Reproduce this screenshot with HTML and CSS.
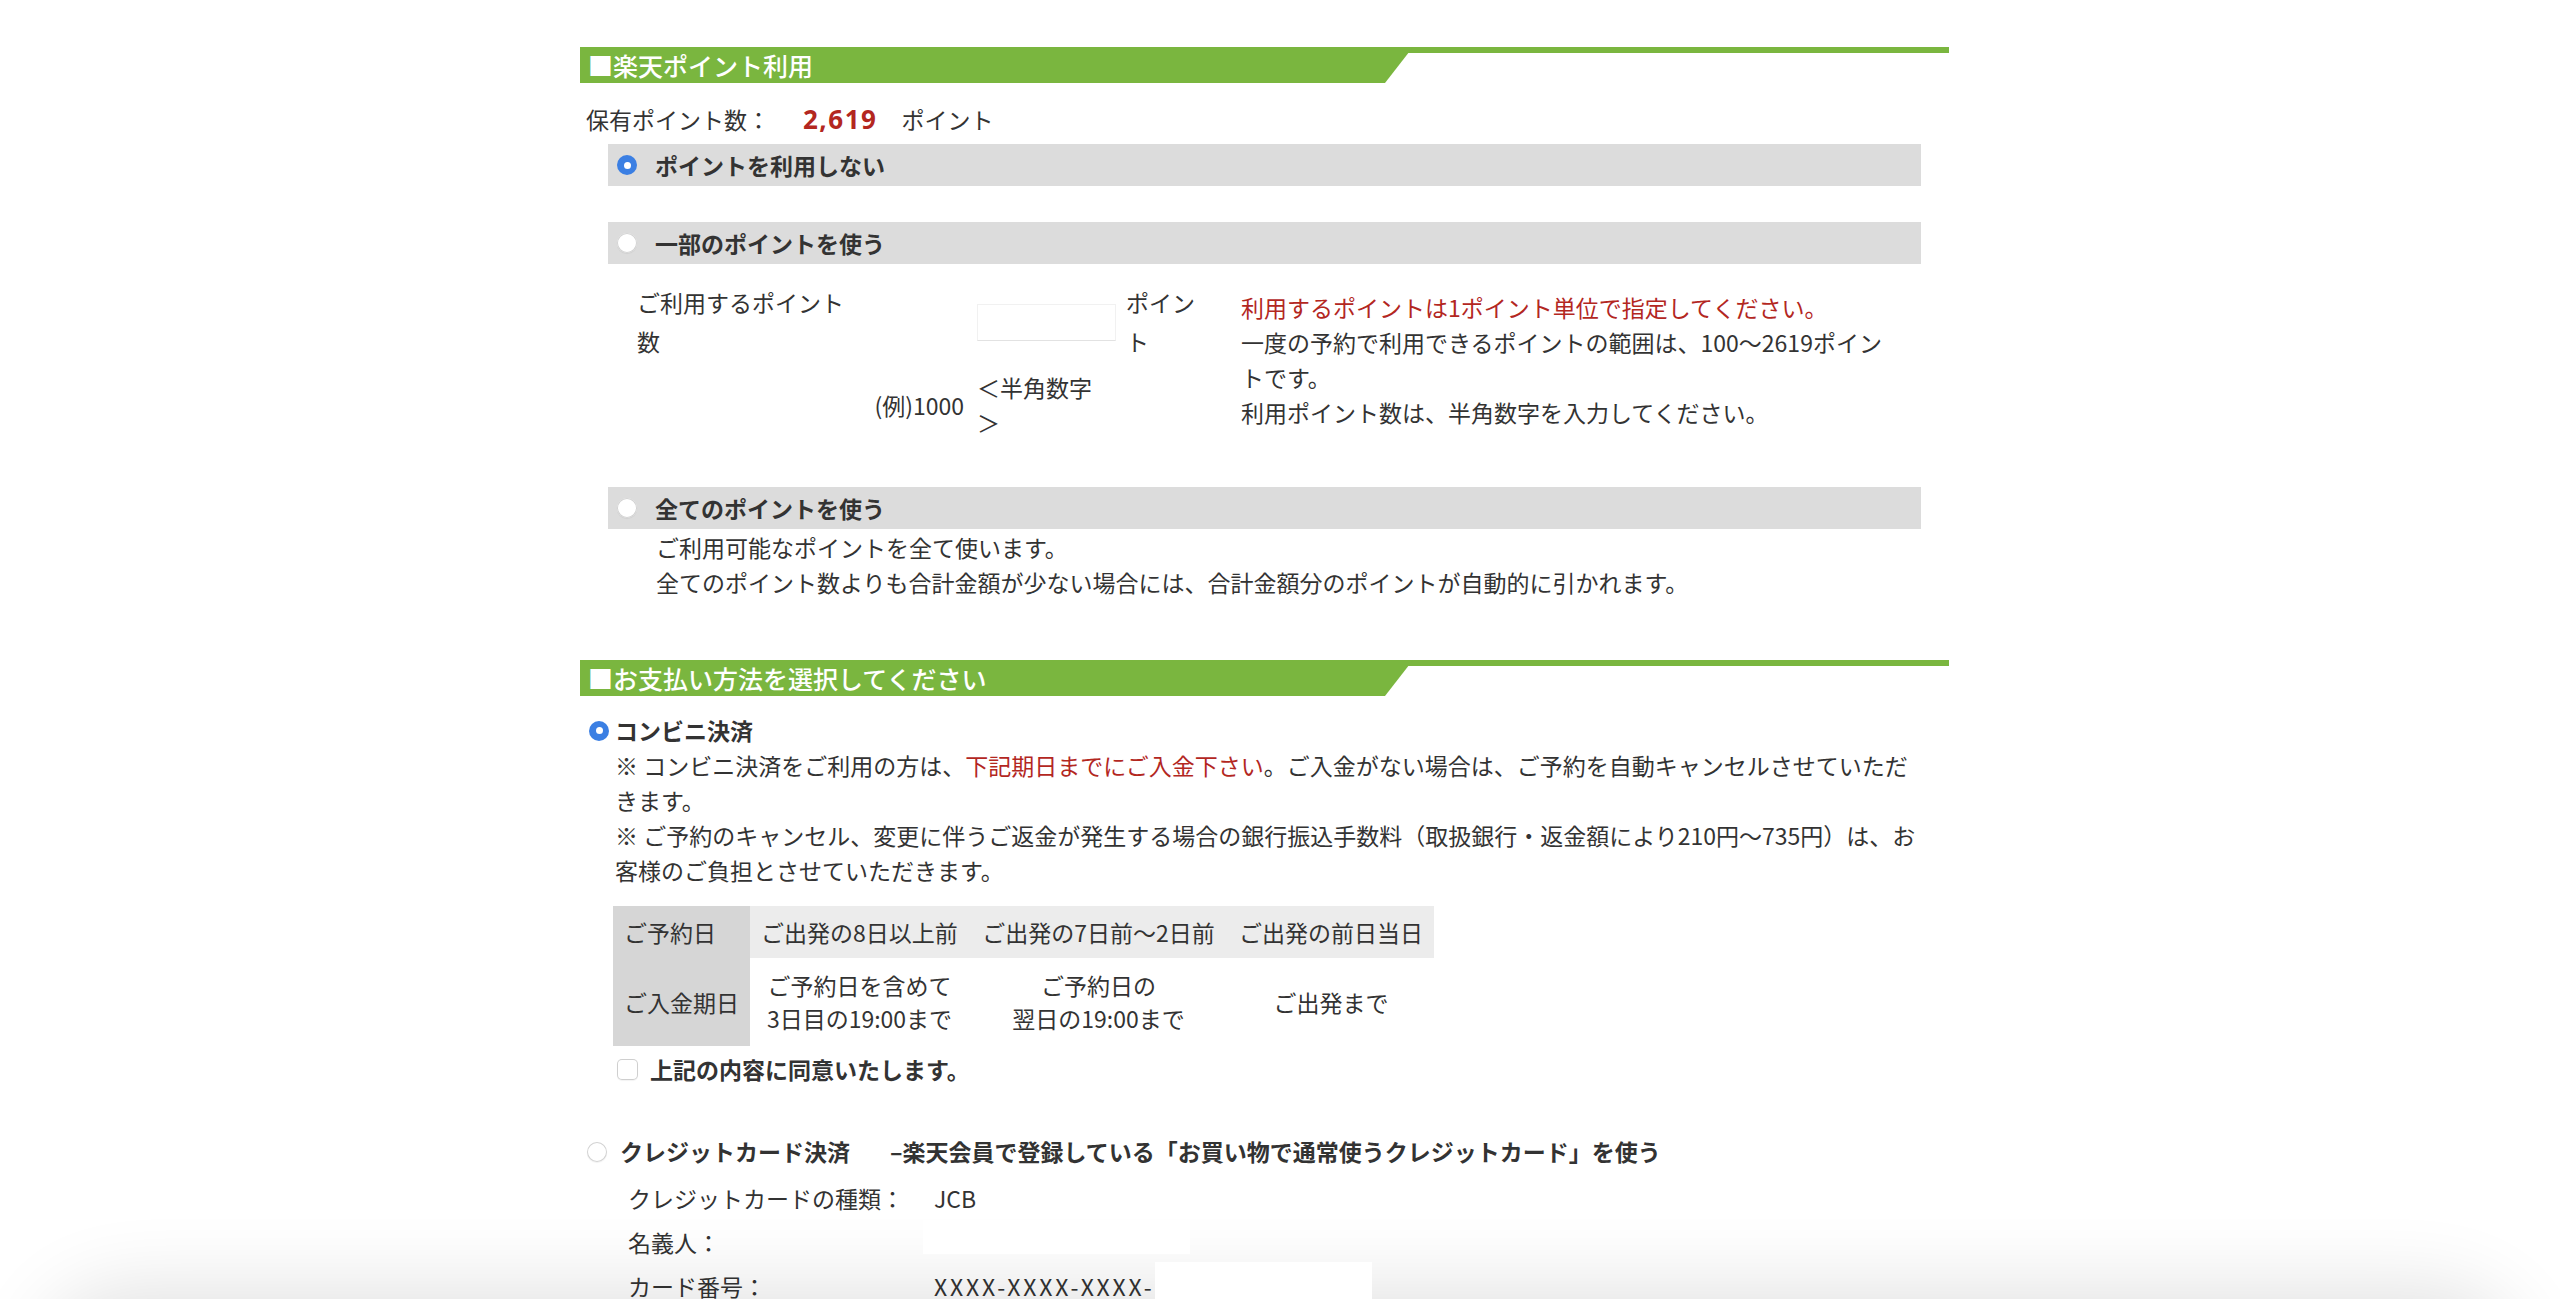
FILE: index.html
```html
<!DOCTYPE html>
<html lang="ja">
<head>
<meta charset="utf-8">
<title>楽天ポイント利用・お支払い方法</title>
<link rel="stylesheet" href="styles.css">
</head>
<body>
<div class="page">
  <section class="points">
    <h2 class="sec-head"><span class="sec-title">■楽天ポイント利用</span></h2>
    <p class="held">保有ポイント数：<strong class="held-num">2,619</strong>ポイント</p>

    <div class="opt-bar opt-first"><span class="radio on"></span><span class="opt-label">ポイントを利用しない</span></div>

    <div class="opt-bar opt-second"><span class="radio"></span><span class="opt-label">一部のポイントを使う</span></div>
    <div class="partial">
      <div class="p-label">ご利用するポイント数</div>
      <div class="p-input"><input class="pt-input" type="text" aria-label="ご利用するポイント数"></div>
      <div class="p-unit">ポイント</div>
      <div class="p-note">
        <p class="red">利用するポイントは1ポイント単位で指定してください。</p>
        <p>一度の予約で利用できるポイントの範囲は、100〜2619ポイントです。</p>
        <p>利用ポイント数は、半角数字を入力してください。</p>
      </div>
      <div class="p-example">(例)1000</div>
      <div class="p-hint">＜半角数字＞</div>
    </div>

    <div class="opt-bar opt-all"><span class="radio"></span><span class="opt-label">全てのポイントを使う</span></div>
    <div class="all-text">
      <p>ご利用可能なポイントを全て使います。</p>
      <p>全てのポイント数よりも合計金額が少ない場合には、合計金額分のポイントが自動的に引かれます。</p>
    </div>
  </section>

  <section class="payment">
    <h2 class="sec-head"><span class="sec-title">■お支払い方法を選択してください</span></h2>

    <div class="pay-row conv"><span class="radio on"></span><span class="pay-label">コンビニ決済</span></div>
    <div class="notes">
      <p>※ コンビニ決済をご利用の方は、<span class="red">下記期日までにご入金下さい</span>。ご入金がない場合は、ご予約を自動キャンセルさせていただきます。</p>
      <p>※ ご予約のキャンセル、変更に伴うご返金が発生する場合の銀行振込手数料（取扱銀行・返金額により210円〜735円）は、お客様のご負担とさせていただきます。</p>
    </div>

    <table class="due">
      <tr class="row-top">
        <th>ご予約日</th>
        <td>ご出発の8日以上前</td>
        <td>ご出発の7日前〜2日前</td>
        <td>ご出発の前日当日</td>
      </tr>
      <tr class="row-bottom">
        <th>ご入金期日</th>
        <td>ご予約日を含めて<br>3日目の19:00まで</td>
        <td>ご予約日の<br>翌日の19:00まで</td>
        <td>ご出発まで</td>
      </tr>
    </table>

    <div class="agree"><span class="check"></span><span class="agree-label">上記の内容に同意いたします。</span></div>

    <div class="pay-row credit"><span class="radio"></span><span class="pay-label">クレジットカード決済<span class="credit-sub">–楽天会員で登録している「お買い物で通常使うクレジットカード」を使う</span></span></div>
    <div class="card-rows">
      <div class="card-row"><span class="card-key">クレジットカードの種類：</span><span class="card-val">JCB</span></div>
      <div class="card-row"><span class="card-key">名義人：</span><span class="card-val"><span class="mask mask-name"></span></span></div>
      <div class="card-row"><span class="card-key">カード番号：</span><span class="card-val"><span class="card-num">XXXX-XXXX-XXXX-</span><span class="mask mask-num"></span></span></div>
    </div>
  </section>
</div>
<div class="shade"></div>
</body>
</html>
```

FILE: styles.css
```css
html, body {
  margin: 0;
  background: #fff;
}

body {
  color: #333;
  font-family: "Noto Sans CJK JP", "Noto Sans", sans-serif;
  font-size: 23px;
  line-height: 35px;
  height: 1299px;
  overflow: hidden;
}

p, h2 {
  margin: 0;
}

.red {
  color: #b3271f;
}

.page {
  margin-left: 580px;
  width: 1369px;
  padding-top: 47px;
}

/* section headings */
.sec-head {
  height: 36px;
  background: linear-gradient(#7ab63f, #7ab63f) no-repeat top left / 100% 6px;
  font-size: 25px;
  font-weight: 500;
}

.sec-title {
  display: block;
  width: 833px;
  height: 36px;
  box-sizing: border-box;
  padding-left: 8px;
  background: #7ab63f;
  color: #fff;
  line-height: 36px;
  white-space: nowrap;
  clip-path: polygon(0 0, 100% 0, calc(100% - 28px) 100%, 0 100%);
}

/* points */
.held {
  margin-top: 19px;
  padding-left: 6px;
}

.held-num {
  color: #b3271f;
  font-family: "Open Sans", "Noto Sans", sans-serif;
  font-size: 26px;
  font-weight: 700;
  letter-spacing: 1.5px;
  margin: 0 24px 0 33px;
}

.opt-bar {
  margin-left: 28px;
  width: 1313px;
  height: 42px;
  box-sizing: border-box;
  padding-left: 9px;
  background: #dcdcdc;
  display: flex;
  align-items: center;
  font-weight: 700;
}

.opt-label {
  margin-left: 18px;
}

.opt-first {
  margin-top: 7px;
}

.opt-second {
  margin-top: 36px;
}

.opt-all {
  margin-top: 47px;
}

/* radios / checkbox */
.radio {
  flex: none;
  position: relative;
  width: 20px;
  height: 20px;
  border-radius: 50%;
  background: #fff;
  box-shadow: inset 0 0 0 1px #d2d2d2, 0 1px 1px rgba(0, 0, 0, 0.06);
}

.radio.on {
  background: #3b7fe3;
  box-shadow: none;
}

.radio.on::after {
  content: "";
  position: absolute;
  left: 6.5px;
  top: 6.5px;
  width: 7px;
  height: 7px;
  border-radius: 50%;
  background: #fff;
}

.check {
  flex: none;
  width: 21px;
  height: 21px;
  border-radius: 5px;
  background: #fff;
  box-shadow: inset 0 0 0 1px #cfcfcf, 0 1px 1px rgba(0, 0, 0, 0.05);
}

/* partial points */
.partial {
  display: grid;
  grid-template-columns: 215px 125px 149px 115px 655px;
  grid-template-rows: 78px 70px;
  row-gap: 9px;
  margin: 19px 0 0 57px;
}

.p-label {
  grid-column: 1;
  grid-row: 1;
  line-height: 39px;
}

.p-input {
  grid-column: 3;
  grid-row: 1;
  align-self: center;
}

.pt-input {
  display: block;
  width: 139px;
  height: 37px;
  box-sizing: border-box;
  margin: 0;
  padding: 0 6px;
  border: 1px solid #f1f1f1;
  border-bottom-color: #e2e2e2;
  background: #fff;
  font: inherit;
}

.p-unit {
  grid-column: 4;
  grid-row: 1;
  width: 70px;
  line-height: 39px;
}

.p-note {
  grid-column: 5;
  grid-row: 1 / span 2;
  padding-top: 7px;
}

.p-example {
  grid-column: 1 / span 2;
  grid-row: 2;
  align-self: center;
  text-align: right;
  padding-right: 13px;
}

.p-hint {
  grid-column: 3;
  grid-row: 2;
  width: 125px;
}

.all-text {
  margin: 1px 0 0 76px;
}

/* payment */
.payment .sec-head {
  margin-top: 60px;
}

.pay-row {
  display: flex;
  align-items: center;
  height: 35px;
  font-weight: 700;
}

.pay-row.conv {
  margin-top: 17px;
  padding-left: 9px;
}

.pay-row.conv .pay-label {
  margin-left: 6px;
}

.notes {
  margin-left: 35px;
  width: 1311px;
}

.due {
  margin: 18px 0 0 33px;
  border-collapse: collapse;
  border-spacing: 0;
}

.due th,
.due td {
  padding: 0 11px;
  font-weight: 400;
  text-align: center;
  white-space: nowrap;
}

.due th {
  width: 113px;
  background: #d6d6d6;
  text-align: left;
}

.row-top th,
.row-top td {
  height: 52px;
}

.row-top td {
  background: #ececec;
}

.row-bottom th,
.row-bottom td {
  height: 88px;
  line-height: 33px;
}

.due td:nth-child(2) {
  width: 197px;
}

.due td:nth-child(3) {
  width: 237px;
}

.due td:nth-child(4) {
  width: 184px;
}

.agree {
  display: flex;
  align-items: center;
  height: 35px;
  margin: 6px 0 0 37px;
  font-weight: 700;
}

.agree-label {
  margin-left: 12px;
}

.pay-row.credit {
  margin-top: 47px;
  padding-left: 7px;
}

.pay-row.credit .pay-label {
  margin-left: 13px;
}

.credit-sub {
  margin-left: 40px;
}

.card-rows {
  margin: 7px 0 0 48px;
}

.card-row {
  display: flex;
  align-items: center;
  height: 44px;
}

.card-key {
  width: 306px;
  flex: none;
}

.card-val {
  display: flex;
  align-items: center;
}

.card-num {
  letter-spacing: 2.8px;
}

.mask {
  position: relative;
  z-index: 2;
  display: block;
  background: #fff;
}

.mask-name {
  width: 267px;
  height: 34px;
  margin: -10px 0 0 -11px;
}

.mask-num {
  width: 217px;
  height: 60px;
  margin: 12px 0 0 0;
}

.shade {
  position: fixed;
  left: 70px;
  right: 70px;
  bottom: -130px;
  height: 110px;
  z-index: 1;
  pointer-events: none;
  border-radius: 60px;
  background: #e4e4e4;
  box-shadow: 0 0 80px 30px rgba(0, 0, 0, 0.12);
}
```
